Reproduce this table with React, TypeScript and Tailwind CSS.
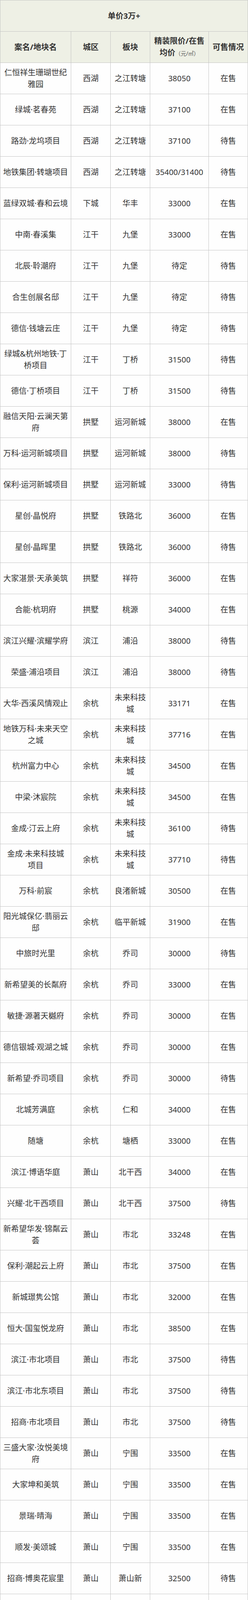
import React from 'react';

type Row = [React.ReactNode, string, string, string, string];

const rows: Row[] = [
  ['仁恒祥生珊瑚世纪雅园', '西湖', '之江转塘', '38050', '在售'],
  ['绿城·茗春苑', '西湖', '之江转塘', '37100', '在售'],
  ['路劲·龙坞项目', '西湖', '之江转塘', '37100', '待售'],
  ['地铁集团·转塘项目', '西湖', '之江转塘', '35400/31400', '待售'],
  ['蓝绿双城·春和云境', '下城', '华丰', '33000', '在售'],
  ['中南·春溪集', '江干', '九堡', '33000', '在售'],
  ['北辰·聆潮府', '江干', '九堡', '待定', '待售'],
  ['合生创展名邸', '江干', '九堡', '待定', '待售'],
  ['德信·钱塘云庄', '江干', '九堡', '待定', '待售'],
  ['绿城&杭州地铁·丁桥项目', '江干', '丁桥', '31500', '待售'],
  ['德信·丁桥项目', '江干', '丁桥', '31500', '待售'],
  ['融信天阳·云澜天第府', '拱墅', '运河新城', '38000', '在售'],
  ['万科·运河新城项目', '拱墅', '运河新城', '38000', '待售'],
  ['保利·运河新城项目', '拱墅', '运河新城', '33000', '待售'],
  ['星创·晶悦府', '拱墅', '铁路北', '36000', '在售'],
  ['星创·晶晖里', '拱墅', '铁路北', '36000', '待售'],
  ['大家湛景·天承美筑', '拱墅', '祥符', '36000', '在售'],
  ['合能·杭玥府', '拱墅', '桃源', '34000', '在售'],
  ['滨江兴耀·滨耀学府', '滨江', '浦沿', '38000', '待售'],
  ['荣盛·浦沿项目', '滨江', '浦沿', '38000', '待售'],
  ['大华·西溪风情观止', '余杭', '未来科技城', '33171', '在售'],
  ['地铁万科·未来天空之城', '余杭', '未来科技城', '37716', '在售'],
  ['杭州富力中心', '余杭', '未来科技城', '34500', '在售'],
  ['中梁·沐宸院', '余杭', '未来科技城', '34500', '在售'],
  ['金成·汀云上府', '余杭', '未来科技城', '36100', '待售'],
  [<>金成·未来科技城<br />项目</>, '余杭', '未来科技城', '37710', '待售'],
  ['万科·前宸', '余杭', '良渚新城', '30500', '在售'],
  ['阳光城保亿·翡丽云邸', '余杭', '临平新城', '31900', '在售'],
  ['中旅时光里', '余杭', '乔司', '30000', '待售'],
  ['新希望美的长粼府', '余杭', '乔司', '33000', '在售'],
  ['敏捷·源著天樾府', '余杭', '乔司', '30000', '在售'],
  ['德信银城·观湖之城', '余杭', '乔司', '30000', '在售'],
  ['新希望·乔司项目', '余杭', '乔司', '30000', '待售'],
  ['北城芳满庭', '余杭', '仁和', '34000', '在售'],
  ['随塘', '余杭', '塘栖', '33000', '在售'],
  ['滨江·博语华庭', '萧山', '北干西', '34000', '在售'],
  ['兴耀·北干西项目', '萧山', '北干西', '37500', '待售'],
  ['新希望华发·锦粼云荟', '萧山', '市北', '33248', '在售'],
  ['保利·潮起云上府', '萧山', '市北', '37500', '在售'],
  ['新城璟隽公馆', '萧山', '市北', '32000', '在售'],
  ['恒大·国玺悦龙府', '萧山', '市北', '38500', '在售'],
  ['滨江·市北项目', '萧山', '市北', '37500', '待售'],
  ['滨江·市北东项目', '萧山', '市北', '37500', '待售'],
  ['招商·市北项目', '萧山', '市北', '37500', '待售'],
  ['三盛大家·汝悦美境府', '萧山', '宁围', '33500', '在售'],
  ['大家坤和美筑', '萧山', '宁围', '33500', '在售'],
  ['景瑞·晴海', '萧山', '宁围', '33500', '在售'],
  ['顺发·美颂城', '萧山', '宁围', '33500', '在售'],
  ['招商·博奥花宸里', '萧山', '萧山新', '32500', '待售'],
  ['众安荷源府', '萧山', '南站', '36900', '在售'],
  ['龙湖融信天琅府', '萧山', '南站', '32755', '在售'],
  ['阳光城东原·印江滨', '萧山', '南站', '32000', '在售'],
  ['奥克斯·金宸玖和府', '萧山', '南站', '35000', '在售'],
  ['绿城·南站项目', '萧山', '南站', '32000', '待售'],
  ['前湾江上湾', '萧山', '萧山科技城', '34451', '在售'],
  ['绿城·金沙湖项目', '钱塘新区', '金沙湖', '37500', '待售'],
  ['绿城春风金沙', '钱塘新区', '金沙湖', '37500', '在售'],
  ['佳源·驭远玖墅', '钱塘新区', '新湾', '31000（排屋）', '在售'],
  ['蓝城芷园', '富阳', '富春', '34000（合院）', '在售'],
  ['悦望名邸', '富阳', '富春', '30000（排屋）', '在售'],
  ['绿城云栖桃花源', '富阳', '银湖', '39800（合院）', '在售'],
  ['大华·春山椿树', '临安', '青山湖', '39769（合院）', '在售'],
  ['青山湖玫瑰园', '临安', '青山湖', '30000（排屋）', '尾房'],
  ['桃李春风', '临安', '青山湖', '33466（合院）', '在售'],
  ['世茂·国风大境', '临安', '青山湖', '35701（合院）', '在售'],
];

// every cell is 80px tall including its bottom border: 1 + 67 * 80 = 5361
const cell =
  'flex h-[80px] items-center justify-center overflow-hidden border-r border-b border-[#c4c4c4] px-[4px] text-center';

export default function App() {
  return (
    <div className="w-[634px] bg-white font-['Noto_Sans','Noto_Sans_CJK_SC',sans-serif] text-[20px] leading-[30px] text-[#333]">
      <div className="grid grid-cols-[181px_101px_101px_150px_100px] border-t border-l border-[#c4c4c4]">
        <div className={`${cell} col-span-5 bg-[#eef0e5] font-bold`}>单价3万+</div>

        <div className={`${cell} bg-[#eef0e5] font-bold`}>案名/地块名</div>
        <div className={`${cell} bg-[#eef0e5] font-bold`}>城区</div>
        <div className={`${cell} bg-[#eef0e5] font-bold`}>板块</div>
        <div className={`${cell} bg-[#eef0e5] font-bold`}>
          <div>
            精装限价/在售均价
            <span className="text-[14px] font-normal text-[#555]">（元/㎡）</span>
          </div>
        </div>
        <div className={`${cell} bg-[#eef0e5] font-bold`}>可售情况</div>

        {rows.map((r, i) => (
          <React.Fragment key={i}>
            {r.map((c, j) => (
              <div key={j} className={`${cell} bg-[#fefefe]`}>
                <div>{c}</div>
              </div>
            ))}
          </React.Fragment>
        ))}
      </div>
    </div>
  );
}
